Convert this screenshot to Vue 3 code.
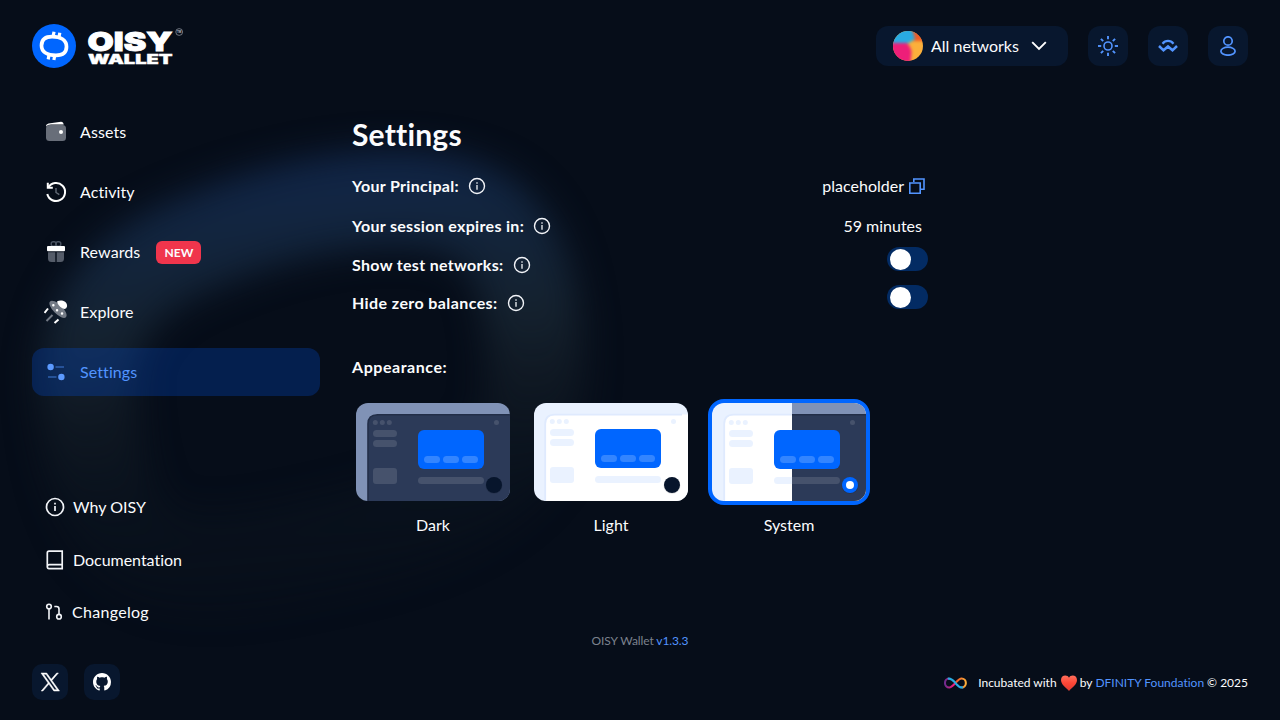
<script setup>
const nav = [
  { id: 'assets', label: 'Assets' },
  { id: 'activity', label: 'Activity' },
  { id: 'rewards', label: 'Rewards', badge: 'NEW' },
  { id: 'explore', label: 'Explore' },
  { id: 'settings', label: 'Settings', active: true }
]
const rows = [
  { id: 'principal', label: 'Your Principal:' },
  { id: 'session', label: 'Your session expires in:' },
  { id: 'testnets', label: 'Show test networks:' },
  { id: 'zero', label: 'Hide zero balances:' }
]
const themes = [
  { id: 'dark', label: 'Dark', shift: 0 },
  { id: 'light', label: 'Light', shift: -1 },
  { id: 'system', label: 'System', shift: 0, selected: true }
]
const rays = [0, 45, 90, 135, 180, 225, 270, 315]
</script>

<template>
  <div class="page">
    <svg class="glow" width="1280" height="720" viewBox="0 0 1280 720">
      <defs>
        <linearGradient id="ring" gradientUnits="userSpaceOnUse" x1="330" y1="150" x2="370" y2="610">
          <stop offset="0" stop-color="#11264a" />
          <stop offset=".15" stop-color="#12253f" />
          <stop offset=".38" stop-color="#15222f" />
          <stop offset=".55" stop-color="#121b25" stop-opacity=".75" />
          <stop offset=".75" stop-color="#0e1822" stop-opacity=".4" />
          <stop offset="1" stop-color="#0c141e" stop-opacity=".2" />
        </linearGradient>
      </defs>
      <path class="halo" d="M88 400C82 330 112 275 200 242C300 200 430 180 488 222C530 255 540 330 534 400C524 485 430 525 320 547C200 575 150 568 117 520C97 485 91 440 88 400Z" fill="none" stroke="url(#ring)" stroke-width="96" />
    </svg>

    <header class="top">
      <svg class="logo" width="156" height="44" viewBox="0 0 156 44">
        <circle cx="22" cy="22" r="22" fill="#06f" />
        <path d="M9.500 21.500C9.500 15 13.500 12.600 20 12.600 29 12.600 34.500 16.500 34.500 22.700 34.500 29 30.500 31.300 24 31.300 15 31.300 9.500 27.800 9.500 21.500Z" fill="none" stroke="#fff" stroke-width="3.700" />
        <path d="M22 7.700l-.8 4.500M27.800 8.700l-.8 4.500M17 31l-.8 4.400M22.700 31.500l-.8 4.600" stroke="#fff" stroke-width="3.200" />
        <text x="55.500" y="26.500" textLength="85" lengthAdjust="spacingAndGlyphs" class="brand big">OISY</text>
        <text x="56" y="39.700" textLength="84.500" lengthAdjust="spacingAndGlyphs" class="brand small">WALLET</text>
        <circle cx="147.200" cy="8" r="3.400" fill="none" stroke="#9ba1ab" stroke-width=".7" />
        <text x="145" y="9.300" textLength="4.400" lengthAdjust="spacingAndGlyphs" class="tm">TM</text>
      </svg>
      <div class="actions">
        <button class="networks">
          <svg width="30" height="30" viewBox="0 0 30 30">
            <defs>
              <clipPath id="disc"><circle cx="15" cy="15" r="15" /></clipPath>
              <filter id="mix" x="-50%" y="-50%" width="200%" height="200%" color-interpolation-filters="sRGB"><feGaussianBlur stdDeviation="1.700" /></filter>
            </defs>
            <g clip-path="url(#disc)">
              <rect width="30" height="30" fill="#fbb03b" />
              <g filter="url(#mix)">
                <path d="M18-6h20v17L27 10 20 10Z" fill="#f15a24" />
                <path d="M-6-6H18L22 8 16 12-6 14Z" fill="#29abe2" />
                <path d="M-6 12H14Q20 18 18 26L17 36H-6Z" fill="#ed1e79" />
              </g>
            </g>
          </svg>
          <span>All networks</span>
          <svg class="chev" width="16" height="10" viewBox="0 0 16 10"><path d="M1.200 1.200L8 8l6.800-6.800" /></svg>
        </button>
        <button class="square">
          <svg width="20" height="20" viewBox="0 0 20 20" class="blue">
            <circle cx="10" cy="10" r="4" stroke-width="1.600" />
            <path v-for="r in rays" :key="r" d="M10 0v3.200" stroke-width="1.900" :transform="`rotate(${r} 10 10)`" />
          </svg>
        </button>
        <button class="square">
          <svg width="20" height="14" viewBox="0 0 20 14" class="blue">
            <path d="M1 7l4.500 4.300L10 7.500l4.500 3.800L19 7" stroke-width="2.500" />
            <path d="M4.500 4.700C7.500 1 12.500 1 15.500 4.700" stroke-width="2.300" />
          </svg>
        </button>
        <button class="square">
          <svg width="16" height="20" viewBox="0 0 16 20" class="blue">
            <circle cx="8" cy="5" r="4.200" stroke-width="1.700" />
            <ellipse cx="8" cy="15.200" rx="7.100" ry="4" stroke-width="1.700" />
          </svg>
        </button>
      </div>
    </header>

    <div class="body">
      <aside>
        <nav class="menu">
          <a v-for="n in nav" :key="n.id" class="item" :class="[n.id, { active: n.active }]">
            <svg width="24" height="24" viewBox="0 0 24 24">
              <g v-if="n.id === 'assets'">
                <rect x="2" y="5" width="20" height="16" rx="3.500" fill="#686e79" />
                <path d="M2 6Q2 4 4.500 3.400L17 1.800Q19.400 1.600 19.800 4.600H7Q3.500 4.600 2 6.500Z" fill="#fff" />
                <circle cx="17" cy="12" r="2" fill="#fff" />
              </g>
              <g v-else-if="n.id === 'activity'" fill="none">
                <path d="M4.300 7.500A9 9 0 1 1 3.300 14" stroke="#fff" stroke-width="2" />
                <path d="M3.800 2.800v5h5" stroke="#fff" stroke-width="2" />
                <path d="M12 8v4.500l3.300 2.200" stroke="#646c78" stroke-width="1.400" />
              </g>
              <g v-else-if="n.id === 'rewards'">
                <rect x="7.200" y="1.800" width="4.800" height="4.500" rx="2" fill="none" stroke="#4a5361" stroke-width="1.400" />
                <rect x="12" y="1.800" width="4.800" height="4.500" rx="2" fill="none" stroke="#4a5361" stroke-width="1.400" />
                <rect x="3" y="6" width="18" height="5.300" rx="1" fill="#fff" />
                <path d="M4 12.300h7.300V22H7.500Q4 22 4 18.500ZM12.700 12.300H20v6.200Q20 22 16.500 22h-3.800Z" fill="#555c69" />
              </g>
              <g v-else-if="n.id === 'explore'">
                <ellipse cx="14" cy="9.300" rx="11.200" ry="4.700" transform="rotate(45 14 9.300)" fill="#747b86" />
                <path d="M13 1.500C16.500-1 23.800 1 23 6.500Q22.600 8.500 20.500 9C16 7.500 14 5 13 1.500Z" fill="#fff" />
                <path d="M9.300 5.200h.1M13 10.200h.1M18 13.500h.1" stroke="#fff" stroke-width="2.400" stroke-linecap="round" />
                <path d="M4 8.500L.5 13M14.500 19.500L10.500 23" stroke="#fff" stroke-width="2" />
                <path d="M8.500 15L2.500 21" stroke="#747b86" stroke-width="2" />
              </g>
              <g v-else>
                <circle cx="6.600" cy="7" r="3.200" fill="#5c9aff" /><circle cx="17.400" cy="17" r="3.200" fill="#5c9aff" />
                <path d="M11.500 7H20M4 17h8.500" stroke="#2f60ad" stroke-width="1.600" />
              </g>
            </svg>
            <span class="label">{{ n.label }}</span>
            <b v-if="n.badge" class="badge">{{ n.badge }}</b>
          </a>
        </nav>
        <div class="links">
          <a class="why">
            <svg width="20" height="20" viewBox="0 0 20 20" class="line"><circle cx="10" cy="10" r="8.500" stroke-width="1.700" /><path d="M10 9v5M10 5.700v1.700" stroke-width="1.700" /></svg>
            <span>Why OISY</span>
          </a>
          <a class="docs">
            <svg width="20" height="20" viewBox="0 0 20 20" class="line"><path d="M2.300 17V3Q2.300 1.200 4 1.200H17.200V18.600H4Q2.300 18.600 2.300 16.800 2.300 14.600 4.500 14.600H17" stroke-width="1.700" /></svg>
            <span>Documentation</span>
          </a>
          <a class="changes">
            <svg width="20" height="20" viewBox="0 0 20 20" class="line"><g stroke-width="1.600"><circle cx="4" cy="4.500" r="2.300" /><circle cx="14" cy="14.700" r="2.300" /><path d="M4 7v10.500M14 12.200V7Q14 4.500 11.500 4.500H9.300" /></g></svg>
            <span>Changelog</span>
          </a>
        </div>
      </aside>

      <main>
        <h1><span>Settings</span></h1>
        <div v-for="r in rows" :key="r.id" class="row" :class="r.id">
          <b>{{ r.label }}</b>
          <svg width="18" height="18" viewBox="0 0 18 18" class="line"><circle cx="9" cy="9" r="7.500" stroke-width="1.400" /><path d="M9 8v4.700M9 5.300v1.400" stroke-width="1.300" /></svg>
          <span class="grow"></span>
          <template v-if="r.id === 'principal'">
            <span class="value">placeholder</span>
            <svg class="copy blue" width="18" height="18" viewBox="0 0 18 18"><path d="M5.800 5V2h10.200v10.200h-3.300M1.800 6h10.400v10.200H1.800Z" stroke-width="1.600" /></svg>
          </template>
          <span v-else-if="r.id === 'session'" class="value">59 minutes</span>
          <span v-else class="toggle"><i></i></span>
        </div>
        <h2><span>Appearance:</span></h2>
        <div class="themes">
          <div v-for="t in themes" :key="t.id" class="theme">
            <div class="card" :class="[t.id, { selected: t.selected }]">
              <svg width="154" height="98" viewBox="0 0 154 98">
                <defs><clipPath :id="'half-' + t.id"><rect x="80" width="74" height="98" /></clipPath></defs>
                <g v-if="t.id !== 'dark'">
                  <rect width="154" height="98" fill="#eaf2ff" />
                  <path :transform="`translate(${t.shift})`" d="M12 99V21Q12 11.500 21.500 11.500H156V99Z" fill="#fff" />
                  <path :transform="`translate(${t.shift})`" d="M12.200 99V21Q12.200 11.600 21.500 11.600H149" fill="none" stroke="#dfeafe" stroke-width="1.800" />
                </g>
                <g v-if="t.id !== 'light'" :clip-path="t.id === 'system' ? 'url(#half-system)' : undefined">
                  <rect width="154" height="98" fill="#8092b6" />
                  <path d="M12 99V21Q12 11.800 21.500 11.800H156V99Z" fill="#2c3a58" stroke="#222e48" stroke-width="1.600" />
                </g>
                <g :transform="`translate(${t.shift} ${t.shift})`" :class="['parts', t.id]">
                  <circle cx="19.300" cy="19.500" r="2.500" /><circle cx="26.300" cy="19.500" r="2.500" /><circle cx="33.300" cy="19.500" r="2.500" />
                  <circle cx="140.500" cy="19.500" r="2.500" class="corner" />
                  <rect x="17" y="27" width="24" height="7" rx="3.500" /><rect x="17" y="37" width="24" height="7" rx="3.500" />
                  <rect x="17" y="65" width="24" height="16" rx="3" />
                  <path v-if="t.id === 'system'" d="M80 74H65.500a3.500 3.500 0 0 0 0 7H80Z" />
                  <path v-if="t.id === 'system'" d="M80 74h44.500a3.500 3.500 0 0 1 0 7H80Z" class="corner" />
                  <rect v-else x="62" y="74" width="66" height="7" rx="3.500" />
                </g>
                <g :transform="`translate(${t.shift} ${t.shift})`">
                  <rect x="62" y="27" width="66" height="39" rx="6" fill="#06f" />
                  <rect v-for="x in [68, 87, 106]" :key="x" :x="x" y="53" width="16" height="7" rx="3.500" fill="#3385ff" />
                </g>
                <circle cx="138" cy="82.500" r="8.500" fill="#000" opacity=".1" />
                <circle cx="138" cy="82" r="8" :fill="t.selected ? '#06f' : '#07152c'" />
                <circle v-if="t.selected" cx="138" cy="82" r="4" fill="#fff" />
              </svg>
            </div>
            <span>{{ t.label }}</span>
          </div>
        </div>
      </main>
    </div>

    <p class="version">OISY Wallet <a>v1.3.3</a></p>
    <footer>
      <div class="social">
        <a><svg width="20" height="20" viewBox="0 0 20 20"><path d="M1 1h5.700l4.500 6.300L16.700 1h1.700l-6.400 7.400L19.500 19h-5.700l-4.900-6.900L2.900 19H1.200l6.900-8L1 1Zm2.500 1.300L14.500 17.700H17L6 2.300Z" fill="#fff" stroke="#fff" stroke-width=".5" /></svg></a>
        <a><svg width="18" height="18" viewBox="0 0 16 16"><path fill="#fff" d="M8 0C3.580 0 0 3.580 0 8c0 3.540 2.290 6.530 5.470 7.590.4.070.55-.17.55-.38 0-.19-.01-.82-.01-1.490-2.010.37-2.530-.49-2.690-.94-.09-.23-.48-.94-.82-1.130-.28-.15-.68-.52-.01-.53.63-.01 1.080.58 1.230.82.72 1.210 1.870.87 2.330.66.07-.52.28-.87.51-1.070-1.780-.2-3.640-.89-3.640-3.950 0-.87.31-1.590.82-2.150-.08-.2-.36-1.020.08-2.120 0 0 .67-.21 2.200.82.64-.18 1.320-.27 2-.27s1.360.09 2 .27c1.530-1.040 2.200-.82 2.200-.82.44 1.100.16 1.920.08 2.120.51.56.82 1.270.82 2.150 0 3.070-1.870 3.750-3.650 3.950.29.25.54.73.54 1.480 0 1.070-.01 1.930-.01 2.200 0 .21.15.46.55.38A8.010 8.010 0 0 0 16 8c0-4.420-3.580-8-8-8Z" /></svg></a>
      </div>
      <div class="credit">
        <svg class="inf" width="24" height="12" viewBox="0 0 24 12">
          <defs>
            <linearGradient id="warm"><stop offset=".2" stop-color="#f15a24" /><stop offset="1" stop-color="#fbb03b" /></linearGradient>
            <linearGradient id="cool"><stop offset="0" stop-color="#6d2a8c" /><stop offset=".8" stop-color="#ed1e79" /></linearGradient>
          </defs>
          <g fill="none" stroke-width="2.200" transform="scale(.95 1)">
            <path d="M12 6C15 3 16.300 1.500 18.500 1.500A4.400 4.400 0 0 1 18.500 10.500" stroke="url(#warm)" />
            <path d="M12 6C9 9 7.700 10.500 5.500 10.500A4.400 4.400 0 0 1 5.500 1.500" stroke="url(#cool)" />
            <path d="M4 1.800C7.500.5 9.500 3.500 12 6S16.500 11.500 20 10.200" stroke="#29abe2" />
          </g>
        </svg>
        <span>Incubated with</span>
        <svg class="heart" width="16" height="16" viewBox="0 0 16 16">
          <defs><linearGradient id="hg" x2="0" y2="1"><stop offset="0" stop-color="#ff705d" /><stop offset=".5" stop-color="#fc4636" /><stop offset="1" stop-color="#dc3c32" /></linearGradient></defs>
          <path d="M8 2.800C9.300-.7 16-.7 16 5.100 16 9.500 11.500 12.500 8 16 4.500 12.500 0 9.500 0 5.100 0-.7 6.700-.7 8 2.800Z" fill="url(#hg)" />
        </svg>
        <span>by</span>
        <a class="dfinity">DFINITY Foundation</a>
        <span>© 2025</span>
      </div>
    </footer>
  </div>
</template>

<style>
body { background: #060d19; }
</style>

<style scoped>
* { box-sizing: border-box; }
.page { position: relative; width: 1280px; height: 720px; overflow: hidden; background: #060d19; color: #fbfcfe; font: 16px/24px Lato, "Liberation Sans", sans-serif; font-variant-ligatures: none; display: flex; flex-direction: column; }
.page > :not(.glow) { position: relative; }
.page > .glow { position: absolute; inset: 0; }
.halo { filter: blur(17px); }
svg { display: block; flex: none; }
a { color: inherit; }
.blue { fill: none; stroke: #5294ff; }
.line { fill: none; stroke: #f2f4f8; }
.top { height: 92px; padding: 24px 32px 0; display: flex; justify-content: space-between; }
.brand { font-family: Inter, sans-serif; font-weight: 900; fill: #fff; stroke: #fff; }
.big { font-size: 26px; stroke-width: .9px; }
.small { font-size: 12.500px; stroke-width: .4px; }
.tm { font: 700 3px Inter, sans-serif; fill: #b7bcc5; }
.actions { display: flex; gap: 20px; padding-top: 2px; }
button { border: 0; background: #08172e; border-radius: 12px; height: 40px; color: #fbfcfe; font: inherit; display: flex; align-items: center; justify-content: center; padding: 0; }
.square { width: 40px; }
.networks { width: 192px; justify-content: flex-start; padding-left: 17px; }
.networks span { width: 88px; margin-left: 8px; white-space: nowrap; text-align: left; }
.chev { margin-left: 12px; fill: none; stroke: #fff; stroke-width: 1.900; }
.body { display: flex; height: 540px; padding: 16px 32px 0; }
aside { width: 288px; margin-right: 32px; }
.menu { display: flex; flex-direction: column; gap: 12px; }
.item { height: 48px; border-radius: 12px; padding: 0 12px; display: flex; align-items: center; gap: 12px; letter-spacing: .1px; }
.item.active { background: rgba(0, 92, 255, .23); color: #5294ff; }
.badge { background: #f0354c; border-radius: 6px; font-size: 12px; line-height: 23px; height: 23px; width: 45px; text-align: center; margin-left: 4px; }
.links { margin-top: 99px; display: flex; flex-direction: column; gap: 28.500px; padding-left: 13px; }
.links a { display: flex; align-items: center; gap: 8px; height: 24px; }
.docs { letter-spacing: -.03px; }
.changes span { margin-left: -1px; letter-spacing: .3px; }
main { width: 576px; }
h1 { margin: 6px 0 12px; font-size: 30px; line-height: 40px; font-weight: 700; letter-spacing: .2px; }
.row { display: flex; align-items: center; height: 40px; }
.row b { letter-spacing: .32px; }
.row svg.line { margin-left: 9px; }
.row.principal { padding-right: 2px; }
.copy { margin-left: 4px; }
.row.session { padding-right: 6px; }
.row.testnets { height: 38px; }
.row.zero { height: 38px; }
.row.zero b { letter-spacing: .4px; }
.grow { flex: 1; }
.toggle { width: 41px; height: 24px; border-radius: 12px; background: #032b63; padding: 1.500px 2.500px; margin-bottom: 12px; }
.toggle i { display: block; width: 21px; height: 21px; border-radius: 50%; background: #fff; }
h2 { margin: 33px 0 20px; font-size: 16px; line-height: 24px; letter-spacing: .55px; }
.themes { display: flex; gap: 16px; }
.theme { width: 162px; display: flex; flex-direction: column; align-items: center; gap: 8px; }
.card { width: 162px; height: 106px; border: 4px solid transparent; border-radius: 16px; }
.card svg { border-radius: 12px; }
.card.selected { border-color: #06f; background: #06f; }
.parts { fill: #eaf2ff; }
.parts.dark, .parts.system .corner { fill: #46526c; }
.version { margin: 0; text-align: center; font-size: 12px; line-height: 18px; letter-spacing: -.1px; color: #7c828e; }
.version a { color: #5294ff; }
footer { display: flex; justify-content: space-between; padding: 14px 32px 0; }
.social { display: flex; gap: 16px; }
.social a { width: 36px; height: 36px; border-radius: 10px; background: #08172e; display: flex; align-items: center; justify-content: center; }
.credit { display: flex; align-items: center; height: 38px; font-size: 12px; white-space: nowrap; }
.inf { margin-right: 10px; }
.heart { margin: 0 3px 0 4px; }
.dfinity { color: #5294ff; margin: 0 3px; }
</style>
